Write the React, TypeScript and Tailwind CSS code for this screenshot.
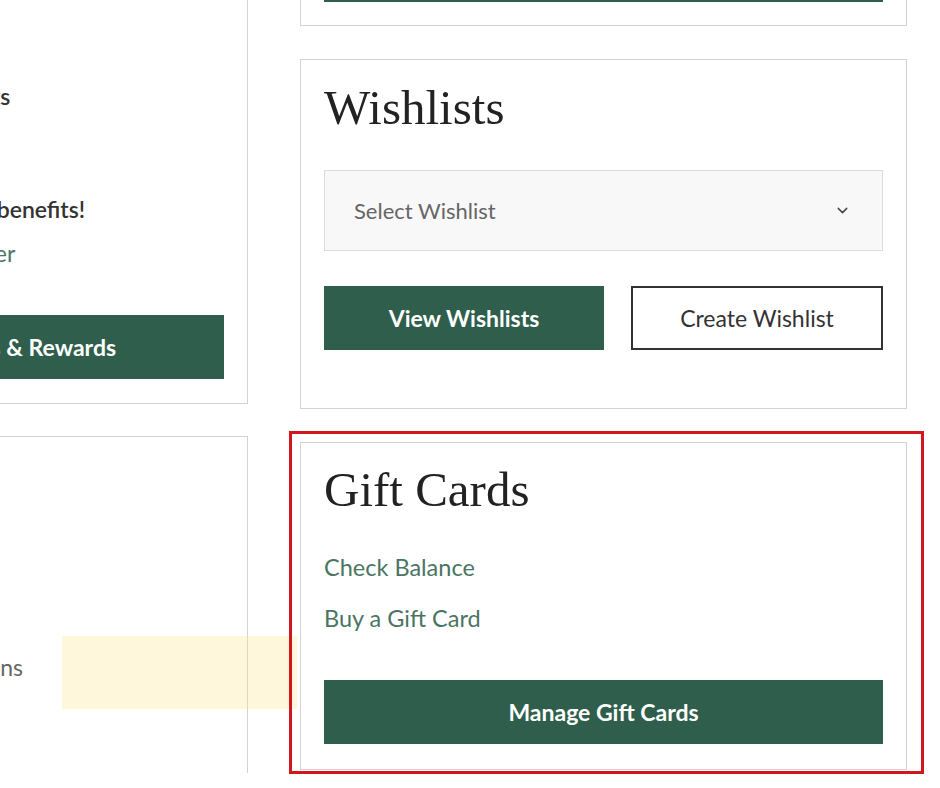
import { ChevronDown } from 'lucide-react'

const serif = "font-['Liberation_Serif','Times_New_Roman',serif]"

function Card({ className = '', children }: { className?: string; children?: React.ReactNode }) {
  return <div className={`border border-[#d3d3d3] bg-white ${className}`}>{children}</div>
}

function GreenButton({ children, className = '' }: { children: React.ReactNode; className?: string }) {
  return (
    <button
      className={`flex h-[64px] items-center justify-center bg-[#2f5f4c] text-[23px] font-bold text-white ${className}`}
    >
      {children}
    </button>
  )
}

export default function App() {
  return (
    <div className="relative h-[788px] overflow-hidden bg-white font-['Lato','Liberation_Sans',sans-serif] text-[#333]">
      <div className="-mt-[100px] ml-[-253px] flex gap-[52px]">
        {/* Left column: rewards + account */}
        <div className="flex w-[501px] shrink-0 flex-col gap-[32px]">
          <Card className="flex h-[504px] flex-col px-[23px]">
            <p className="-ml-[4px] mt-[178px] text-[23px] font-semibold leading-[34px] text-[#333]">Available Reward Points</p>
            <p className="ml-[13px] mt-[79px] text-[23px] font-semibold leading-[34px] text-[#333]">Join now and unlock benefits!</p>
            <a className="ml-[54px] mt-[10px] text-[23px] leading-[34px] text-[#4a7563]">Become a Member</a>
            <GreenButton className="mt-[45px] w-full">View Points &amp; Rewards</GreenButton>
          </Card>
          <Card className="flex h-[337px] flex-col border-b-0 px-[23px]">
            <p className="ml-[30px] mt-[213px] text-[23px] leading-[34px] text-[#666]">Manage Subscriptions</p>
          </Card>
        </div>

        {/* Right column */}
        <div className="flex w-[607px] shrink-0 flex-col gap-[33px]">
          <Card className="flex h-[126px] flex-col justify-end px-[23px] pb-[23px]">
            <GreenButton className="w-full">Manage Orders</GreenButton>
          </Card>

          <Card className="h-[350px] px-[23px] pt-[19px]">
            <h2 className={`${serif} text-[49px] leading-[1.2] text-[#222]`}>Wishlists</h2>
            <div className="mt-[32px] flex h-[81px] items-center justify-between border border-[#dcdcdc] bg-[#f8f8f8] pl-[29px] pr-[31px]">
              <span className="text-[22px] text-[#666]">Select Wishlist</span>
              <ChevronDown size={17} strokeWidth={2} className="text-[#444]" />
            </div>
            <div className="mt-[35px] flex gap-[27px]">
              <GreenButton className="w-[280px]">View Wishlists</GreenButton>
              <button className="flex h-[64px] flex-1 items-center justify-center border-2 border-[#333] text-[23px] text-[#333]">
                Create Wishlist
              </button>
            </div>
          </Card>

          <Card className="h-[328px] px-[23px] pt-[18px]">
            <h2 className={`${serif} text-[49px] leading-[1.2] text-[#222]`}>Gift Cards</h2>
            <div className="mt-[32px] flex flex-col gap-[21px]">
              <a className="text-[23.5px] leading-[30px] text-[#4a7563]">Check Balance</a>
              <a className="text-[23.5px] leading-[30px] text-[#4a7563]">Buy a Gift Card</a>
            </div>
            <GreenButton className="mt-[47px] w-full">Manage Gift Cards</GreenButton>
          </Card>
        </div>
      </div>

      {/* Annotation overlays */}
      <div className="pointer-events-none absolute left-[62px] top-[636px] h-[73px] w-[235px] bg-[#fde68a]/30" />
      <div className="pointer-events-none absolute left-[289px] top-[431px] h-[343px] w-[635px] border-[3px] border-[#d3161d]" />
    </div>
  )
}
